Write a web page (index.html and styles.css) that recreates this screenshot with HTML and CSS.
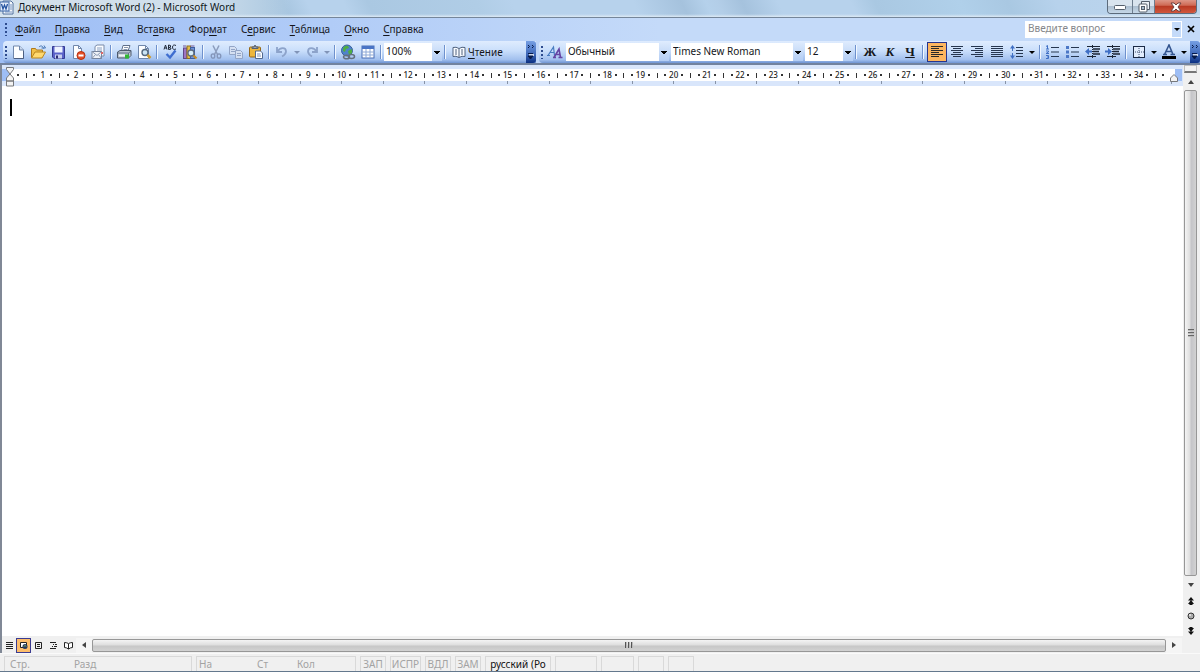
FILE: index.html
```html
<!DOCTYPE html>
<html lang="ru">
<head>
<meta charset="utf-8">
<title>Документ Microsoft Word (2) - Microsoft Word</title>
<link rel="stylesheet" href="styles.css">
</head>
<body>
<div class="window">
  <header class="titlebar">
    <svg class="app-icon" width="14" height="15" viewBox="0 0 14 15"><path d="M3 1h8l2 2v11H3z" fill="#f4f8fd" stroke="#51709e"/><path d="M10 5h2M10 7h2M10 9h2M5 12h7" stroke="#7895c2"/><rect x="0" y="2" width="9" height="9" fill="#e7effb" stroke="#3a66a8"/><path d="M1.500 4l1.500 5 1.500-4 1.500 4 1.500-5" fill="none" stroke="#2554a0" stroke-width="1.300"/></svg>
    <h1 class="title">Документ Microsoft Word (2) - Microsoft Word</h1>
    <div class="controls">
      <button class="ctl ctl-min" aria-label="Свернуть"><svg width="12" height="6" viewBox="0 0 12 6"><rect x=".5" y="1.500" width="11" height="4" rx="1" fill="#fff" stroke="#555f6b"/></svg></button>
      <button class="ctl ctl-max" aria-label="Восстановить"><svg width="12" height="12" viewBox="0 0 12 12"><path d="M3.500 3V.500h8v8H9" fill="#eef3f8" stroke="#555f6b"/><rect x="1" y="3" width="8" height="8" rx="1" fill="#fff" stroke="#555f6b"/><rect x="3.500" y="5.500" width="3" height="3" fill="#a9bccd" stroke="#555f6b"/></svg></button>
      <button class="ctl ctl-close" aria-label="Закрыть"><svg width="12" height="10" viewBox="0 0 12 10"><path d="M1 1h3l2 2 2-2h3L8 5l3 4H8L6 7 4 9H1l3-4z" fill="#fff" stroke="#6b4343"/></svg></button>
    </div>
  </header>

  <nav class="menubar">
    <span class="grip"></span>
    <div class="menus">
      <a href="#"><u>Ф</u>айл</a><a href="#"><u>П</u>равка</a><a href="#"><u>В</u>ид</a><a href="#">Вст<u>а</u>вка</a><a href="#">Фор<u>м</u>ат</a><a href="#">С<u>е</u>рвис</a><a href="#"><u>Т</u>аблица</a><a href="#"><u>О</u>кно</a><a href="#"><u>С</u>правка</a>
    </div>
    <div class="ask"><input type="text" placeholder="Введите вопрос" aria-label="Введите вопрос"><button class="drop" aria-label="Список вопросов"></button></div>
    <button class="doc-close" aria-label="Закрыть документ"><svg width="8" height="8" viewBox="0 0 8 8"><path d="M1 1l6 6M7 1L1 7" stroke="#000" stroke-width="1.700"/></svg></button>
  </nav>

  <div class="toolbars">
    <div class="toolbar standard" role="toolbar" aria-label="Стандартная">
      <span class="grip"></span>
      <button class="tool" aria-label="Создать"><svg viewBox="0 0 16 16"><path d="M3.500 2h6l4 4v8.500h-10z" fill="#fdfeff" stroke="#7087ab"/><path d="M9.500 2v4h4" fill="#c9d8ee" stroke="#7087ab"/><path d="M4 14.500h9.500V7" fill="none" stroke="#4d5f80"/></svg></button>
      <button class="tool" aria-label="Открыть"><svg viewBox="0 0 16 16"><path d="M1.500 13.500V4.500h4l1 1.500h6v3" fill="#f2c14a" stroke="#b07a1c"/><path d="M1.500 14L5 8h10.500l-3.500 6z" fill="#ffd970" stroke="#b9851f"/><path d="M9 3c2-2 4-1 4.500 1.500M11.500 4h4L14 1.500" fill="none" stroke="#4776b5"/></svg></button>
      <button class="tool" aria-label="Сохранить"><svg viewBox="0 0 16 16"><path d="M2.500 2.500h12v12H4l-1.500-1.500z" fill="#5a62c9" stroke="#343a92"/><rect x="4.500" y="2.500" width="8" height="6" fill="#eef3ff"/><rect x="5" y="10.500" width="7" height="4" fill="#c8cfee"/><rect x="6" y="11.500" width="2" height="3" fill="#2b2f74"/></svg></button>
      <button class="tool" aria-label="Разрешения"><svg viewBox="0 0 16 16"><path d="M3.500 1.500h5l3 3v10h-8z" fill="#fdfeff" stroke="#7087ab"/><path d="M8.500 1.500v3h3" fill="none" stroke="#7087ab"/><circle cx="11" cy="11.500" r="4" fill="#e4502b" stroke="#b8300f"/><rect x="8.500" y="10.500" width="5" height="2" fill="#fff"/></svg></button>
      <button class="tool" aria-label="Сообщение"><svg viewBox="0 0 16 16"><path d="M5 7V2.500L7 1h7v11H8" fill="#fafcff" stroke="#7b8ba8"/><path d="M7 4h5M7 6h5" stroke="#8ba0c0"/><rect x="2" y="7.500" width="9.500" height="7" fill="#eef1f6" stroke="#77859e"/><path d="M2 7.500l5 4 4.500-4M2 14.500l3.500-4M11.500 14.500l-3-4" fill="none" stroke="#8c9bb5"/><rect x="11" y="8" width="2" height="2" fill="#d66"/></svg></button>
      <span class="sep"></span>
      <button class="tool" aria-label="Печать"><svg viewBox="0 0 16 16"><path d="M5.500 7L7 1.500h7L12 7" fill="#fff" stroke="#60708a"/><path d="M8 3.500h4M7.500 5.500h4" stroke="#8796ae"/><path d="M1.500 8L4 6.500h11v5L12.500 14h-11z" fill="#b9c2cf" stroke="#4e5a6c"/><path d="M2 9h10.500V14M12.500 9L15 7" fill="none" stroke="#617086"/><rect x="3" y="10.500" width="8" height="2" fill="#f1f4f8"/><rect x="9" y="10.500" width="4" height="4" fill="#31b834"/></svg></button>
      <button class="tool" aria-label="Предварительный просмотр"><svg viewBox="0 0 16 16"><path d="M2.500 1.500h7l3 3v10h-10z" fill="#fdfeff" stroke="#7087ab"/><path d="M9.500 1.500v3h3" fill="none" stroke="#7087ab"/><circle cx="9" cy="8.500" r="3" fill="#cbe5f5" stroke="#566a80" stroke-width="1.400"/><path d="M11.500 11l3 3" stroke="#cf9b2a" stroke-width="2.500"/></svg></button>
      <span class="sep"></span>
      <button class="tool" aria-label="Правописание"><svg viewBox="0 0 16 16"><path d="M2 5.500l1.500-4.500L5 5.500M2.500 4h2M6.500 5.500V1q3 0 2 2-1 .5-2 .5 3 0 2.500 1.500Q8.500 5.500 6.500 5.500M14 1.500q-3-1.500-3.500 1.500Q10.500 6.500 14 5" fill="none" stroke="#222b3b"/><path d="M4.500 10l3.500 3.500L13.500 6.500" fill="none" stroke="#3f6ed0" stroke-width="2.400"/></svg></button>
      <button class="tool" aria-label="Справочные материалы"><svg viewBox="0 0 16 16"><rect x="1.500" y="4" width="3.500" height="10.500" fill="#9d75c4" stroke="#604787"/><rect x="5" y="2" width="3.500" height="12.500" fill="#e4bd43" stroke="#8c6f23"/><rect x="8.500" y="3.500" width="4" height="11" fill="#6d91d8" stroke="#3f5f9e"/><path d="M1 2h3M8.500 2h4" stroke="#70589a"/><circle cx="9" cy="9" r="3" fill="#d7edf8" stroke="#5c6b80" stroke-width="1.300"/><path d="M11.500 11.500l3 3" stroke="#c78e26" stroke-width="2.300"/></svg></button>
      <span class="sep"></span>
      <button class="tool" aria-label="Вырезать"><svg viewBox="0 0 16 16"><path d="M5 1.500l4.500 9M11 1.500l-4.500 9" stroke="#8b9cbc" stroke-width="1.500"/><ellipse cx="5" cy="12" rx="1.800" ry="2.200" fill="none" stroke="#8395b9" stroke-width="1.300"/><ellipse cx="11" cy="12" rx="1.800" ry="2.200" fill="none" stroke="#8395b9" stroke-width="1.300"/></svg></button>
      <button class="tool" aria-label="Копировать"><svg viewBox="0 0 16 16"><g fill="#d5e0f2" stroke="#93a5c6"><path d="M1.500 2.500h5l2 2v6h-7z"/><path d="M3 5.500h4M3 7.500h4"/><path d="M7.500 6.500h5l2 2v6h-7z"/><path d="M9 9.500h4M9 11.500h4"/></g></svg></button>
      <button class="tool" aria-label="Вставить"><svg viewBox="0 0 16 16"><rect x="1.500" y="3" width="11" height="10" rx="1" fill="#edb63c" stroke="#956718"/><path d="M4 4.500V3h2l1-2 1 2h2v1.500z" fill="#9ba5b3" stroke="#566070"/><path d="M7.500 7h5l2 2v5.500h-7z" fill="#fff" stroke="#51698f"/><path d="M9 10h3.500M9 12h4" stroke="#7a91b9"/></svg></button>
      <span class="sep"></span>
      <button class="tool" aria-label="Отменить"><svg viewBox="0 0 16 16"><path d="M3 3v5h5M3.500 7.500C6 3 12 3 12 7.500c0 2-1.500 3.500-4 5" fill="none" stroke="#8da3ca" stroke-width="1.800"/></svg></button>
      <button class="arrow muted" aria-label="Список отмены"></button>
      <button class="tool" aria-label="Вернуть"><svg viewBox="0 0 16 16"><path d="M13 3v5H8M12.500 7.500C10 3 4 3 4 7.500c0 2 1.500 3.500 4 5" fill="none" stroke="#8da3ca" stroke-width="1.800"/></svg></button>
      <button class="arrow muted" aria-label="Список возврата"></button>
      <span class="sep"></span>
      <button class="tool" aria-label="Гиперссылка"><svg viewBox="0 0 16 16"><circle cx="7" cy="6.500" r="5.500" fill="#4f83cb" stroke="#39629c"/><path d="M3 4q2-3 5-2l1 2-3 1-1 3-2-1zM8 7l4-2v4l-3 2z" fill="#4fae42"/><g fill="none" stroke="#64717f" stroke-width="1.500"><ellipse cx="6.500" cy="13" rx="3" ry="1.800"/><ellipse cx="11.500" cy="12.500" rx="3" ry="2"/></g></svg></button>
      <button class="tool" aria-label="Таблица"><svg viewBox="0 0 16 16"><rect x="2" y="2" width="12" height="12" fill="#fff" stroke="#4a6fb5"/><path d="M2 3.500h12" stroke="#4a74c5" stroke-width="3"/><path d="M2 8h12M2 11h12M6 5v9M10 5v9" stroke="#8ea9d6"/></svg></button>
      <span class="sep"></span>
      <select class="combo zoom" aria-label="Масштаб"><option>100%</option></select>
      <span class="sep"></span>
      <button class="reading"><svg width="14" height="14" viewBox="0 0 14 14"><path d="M1 2.500q3-1 6 1 3-2 6-1v9q-3-1-6 1-3-2-6-1z" fill="#f8fbff" stroke="#51637f"/><path d="M7 3.500v9M3 5h2M3 7h2M3 9h2M9 5h2M9 7h2M9 9h2" stroke="#51637f"/></svg><span><u>Ч</u>тение</span></button>
      <button class="cap" aria-label="Параметры панели"><svg width="8" height="18" viewBox="0 0 8 18"><path d="M1 2l1.500 1.500L1 5M5 2l1.500 1.500L5 5" fill="none" stroke="#061a4a"/><path d="M2 12h5" stroke="#fff" stroke-width="1.500"/><path d="M1 10.500h5M1 13h5l-2.500 3z" stroke="#061a4a" fill="#061a4a"/></svg></button>
    </div>

    <div class="toolbar formatting" role="toolbar" aria-label="Форматирование">
      <span class="grip"></span>
      <button class="tool" aria-label="Стили"><svg viewBox="0 0 16 16"><path d="M1 11.500L6.500 3l1 8.500M3.500 8.500h4M0 11.500h3" fill="none" stroke="#477bc0" stroke-width="1.200"/><path d="M7 13.500L12 5l1.500 8.500M9 10.500h4M6 13.500h3M11.500 13.500h4" fill="none" stroke="#6544a4" stroke-width="1.600"/></svg></button>
      <select class="combo style" aria-label="Стиль"><option>Обычный</option></select>
      <select class="combo font" aria-label="Шрифт"><option>Times New Roman</option></select>
      <select class="combo size" aria-label="Размер"><option>12</option></select>
      <span class="sep"></span>
      <button class="tool letter bold">Ж</button>
      <button class="tool letter italic">К</button>
      <button class="tool letter under">Ч</button>
      <span class="sep"></span>
      <button class="tool active" aria-label="По левому краю"><svg viewBox="0 0 16 16"><path d="M2 2.500h12M2 4.500h8M2 6.500h12M2 8.500h8M2 10.500h12M2 12.500h8" stroke="#2c2a28"/></svg></button>
      <button class="tool" aria-label="По центру"><svg viewBox="0 0 16 16"><path d="M2 2.500h12M4 4.500h8M2 6.500h12M4 8.500h8M2 10.500h12M4 12.500h8" stroke="#26364f"/></svg></button>
      <button class="tool" aria-label="По правому краю"><svg viewBox="0 0 16 16"><path d="M2 2.500h12M6 4.500h8M2 6.500h12M6 8.500h8M2 10.500h12M6 12.500h8" stroke="#26364f"/></svg></button>
      <button class="tool" aria-label="По ширине"><svg viewBox="0 0 16 16"><path d="M2 2.500h12M2 4.500h12M2 6.500h12M2 8.500h12M2 10.500h12M2 12.500h12" stroke="#26364f"/></svg></button>
      <button class="tool" aria-label="Междустрочный интервал"><svg viewBox="0 0 16 16"><path d="M7 3.500h7M7 6.500h7M7 9.500h7M7 12.500h7" stroke="#26364f"/><path d="M3.500 2v12" stroke="#3f6fc4" stroke-dasharray="5 2"/><path d="M1 4.500L3.500 1 6 4.500zM1 11.500L3.500 15 6 11.500z" fill="#3f6fc4"/></svg></button>
      <button class="arrow" aria-label="Интервалы"></button>
      <span class="sep"></span>
      <button class="tool" aria-label="Нумерованный список"><svg viewBox="0 0 16 16"><path d="M6 3.500h8M6 8h8M6 12.500h8" stroke="#26364f"/><path d="M1 2.500l1.500-1V5M1 5h3M1 7h2.500v1L1 9.500h3M1 11.500h2.500v3H1M2 13h1.500" fill="none" stroke="#3f6fc4"/></svg></button>
      <button class="tool" aria-label="Маркированный список"><svg viewBox="0 0 16 16"><path d="M6 3.500h8M6 8h8M6 12.500h8" stroke="#26364f"/><path d="M1 2h3v3H1zM1 6.500h3v3H1zM1 11h3v3H1z" fill="#4b77c6"/></svg></button>
      <button class="tool" aria-label="Уменьшить отступ"><svg viewBox="0 0 16 16"><path d="M2 2.500h13M2 12.500h9" stroke="#1c2636"/><path d="M8 5h7M8 7.500h6M8 10h7" stroke="#1c2636" stroke-width="1.600"/><path d="M0 7.500L4 4v2.500h3v2H4V11z" fill="#3f6fc4"/><path d="M7.500 1v14" stroke="#1c2636" stroke-dasharray="1 1"/></svg></button>
      <button class="tool" aria-label="Увеличить отступ"><svg viewBox="0 0 16 16"><path d="M2 2.500h13M2 12.500h9" stroke="#1c2636"/><path d="M8 5h7M8 7.500h6M8 10h7" stroke="#1c2636" stroke-width="1.600"/><path d="M7 7.500L3 4v2.500H0v2h3V11z" fill="#3f6fc4"/><path d="M7.500 1v14" stroke="#1c2636" stroke-dasharray="1 1"/></svg></button>
      <span class="sep"></span>
      <button class="tool" aria-label="Внешние границы"><svg viewBox="0 0 16 16"><rect x="2.500" y="2.500" width="11" height="11" fill="#e2edfd" stroke="#1c2a45"/><path d="M8 4v9M4 8h9" stroke="#3a4d70" stroke-dasharray="1 1"/></svg></button>
      <button class="arrow" aria-label="Границы"></button>
      <button class="tool" aria-label="Цвет шрифта"><svg viewBox="0 0 16 16"><path d="M3.500 10.500L8 1l4 9.500M5.500 7.500h5M2 10.500h4M9.500 10.500h4.500" fill="none" stroke="#34558f" stroke-width="1.600"/><path d="M1 13.500h14" stroke="#000" stroke-width="3"/></svg></button>
      <button class="arrow" aria-label="Цвета шрифта"></button>
      <button class="cap" aria-label="Параметры панели"><svg width="8" height="18" viewBox="0 0 8 18"><path d="M1 2l1.500 1.500L1 5M5 2l1.500 1.500L5 5" fill="none" stroke="#061a4a"/><path d="M2 12h5" stroke="#fff" stroke-width="1.500"/><path d="M1 10.500h5M1 13h5l-2.500 3z" stroke="#061a4a" fill="#061a4a"/></svg></button>
    </div>
  </div>

  <div class="workspace">
    <div class="editor">
      <div class="ruler">
        <svg class="indent-left" width="8" height="21" viewBox="0 0 8 21"><path d="M.500 1.500h7v2L4 8 .500 3.500zM4 8l3.500 4v3h-7v-3zM.500 15h7v5h-7z" fill="#f3f3f3" stroke="#77797d"/></svg>
        <div class="scale">
          <i class="dot"></i>
          <div class="units" id="units"></div>
          <i class="tick"></i><i class="dot"></i>
        </div>
        <div class="tabs" id="tabs"></div>
        <svg class="indent-right" width="8" height="8" viewBox="0 0 8 8"><path d="M4 .500L7.500 4v3.500h-7V4z" fill="#f3f3f3" stroke="#77797d"/></svg>
      </div>
      <main class="page" contenteditable="true" spellcheck="false" aria-label="Документ"><span class="caret"></span></main>
      <div class="bottom">
        <button class="view" aria-label="Обычный режим"><svg viewBox="0 0 9 9"><path d="M1 1.500h7M1 3.500h7M1 5.500h7M1 7.500h7" stroke="#222"/></svg></button>
        <button class="view on" aria-label="Веб-документ"><svg viewBox="0 0 9 9"><path d="M1.500 1.500h6v5h-6z" fill="#fff" stroke="#222"/><circle cx="6" cy="5.500" r="2.500" fill="#24395e"/><path d="M5 5.500l1-1 1 1" fill="none" stroke="#aee06a"/></svg></button>
        <button class="view" aria-label="Разметка страницы"><svg viewBox="0 0 9 9"><path d="M1.500 1.500h6v6h-6zM3 3.500h3M3 5.500h3" fill="none" stroke="#222"/></svg></button>
        <button class="view" aria-label="Структура"><svg viewBox="0 0 9 9"><path d="M1 1.500h6M4 3.500h1M6 3.500h2M3 5.500h1M5 5.500h3M1 7.500h6" stroke="#222"/></svg></button>
        <button class="view" aria-label="Режим чтения"><svg viewBox="0 0 9 9"><path d="M.500 1.500q2 0 4 1 2-1 4-1v5q-2 0-4 1.500-2-1.500-4-1.500zM4.500 3v5" fill="#fff" stroke="#222"/></svg></button>
        <button class="hbtn" aria-label="Прокрутить влево"><svg width="4" height="6" viewBox="0 0 4 6"><path d="M4 0v6L0 3z" fill="#444"/></svg></button>
        <div class="hthumb"><i></i><i></i><i></i></div>
        <button class="hbtn end" aria-label="Прокрутить вправо"><svg width="4" height="6" viewBox="0 0 4 6"><path d="M0 0v6l4-3z" fill="#444"/></svg></button>
      </div>
    </div>
    <div class="vscroll">
      <span class="split"></span>
      <button class="vbtn" aria-label="Прокрутить вверх"><svg width="6" height="4" viewBox="0 0 6 4"><path d="M0 4h6L3 0z" fill="#444"/></svg></button>
      <div class="vthumb"><i></i><i></i><i></i></div>
      <button class="vbtn" aria-label="Прокрутить вниз"><svg width="6" height="4" viewBox="0 0 6 4"><path d="M0 0h6L3 4z" fill="#444"/></svg></button>
      <button class="nav" aria-label="Предыдущая страница"><svg width="6" height="8" viewBox="0 0 6 8"><path d="M0 3.500h6L3 0zM0 7h6L3 3zM1.500 7h3v1h-3z" fill="#111"/></svg></button>
      <button class="nav" aria-label="Выбор объекта перехода"><svg width="8" height="8" viewBox="0 0 8 8"><circle cx="4" cy="4" r="3" fill="#aaa" stroke="#333"/><circle cx="3" cy="3" r="1" fill="#eee"/></svg></button>
      <button class="nav" aria-label="Следующая страница"><svg width="6" height="8" viewBox="0 0 6 8"><path d="M1.500 0h3v1H6L3 5 0 1h1.500zM0 4.500h6L3 8z" fill="#111"/></svg></button>
    </div>
  </div>

  <footer class="status">
    <div class="cell where"><span>Стр.</span><span>Разд</span></div>
    <div class="cell pos"><span>На</span><span>Ст</span><span>Кол</span></div>
    <div class="cell mode">ЗАП</div><div class="cell mode wide">ИСПР</div><div class="cell mode">ВДЛ</div><div class="cell mode">ЗАМ</div>
    <div class="cell lang">русский (Ро</div>
    <div class="cell blank-a"></div><div class="cell blank-b"></div><div class="cell blank-c"></div><div class="cell blank-c"></div>
  </footer>
</div>
<script src="ruler.js"></script>
</body>
</html>
```
FILE: ruler.js
```js
const units = document.getElementById('units');
for (let n = 1; n <= 34; n++) {
  const unit = document.createElement('div');
  unit.className = 'unit';
  unit.innerHTML = `<i class="tick"></i><i class="dot"></i><b>${n}</b><i class="dot"></i>`;
  units.append(unit);
}
const tabs = document.getElementById('tabs');
for (let n = 0; n < 28; n++) tabs.append(document.createElement('i'));
```
FILE: styles.css
```css
* { box-sizing: border-box; }
html, body { height: 100%; }
body { margin: 0; overflow: hidden; font-family: "Noto Sans", "Open Sans", sans-serif; font-size: 10px; line-height: 14px; color: #15171c; }
button { margin: 0; padding: 0; border: 0; background: none; color: inherit; font: inherit; display: flex; align-items: center; justify-content: center; flex: none; }
svg { display: block; flex: none; }
.window { height: 100%; display: flex; flex-direction: column; background: #f0f0f0; border-bottom: 1px solid #64788d; }

.titlebar { display: flex; align-items: flex-start; height: 18px; padding-right: 3px; flex: none; border-bottom: 1px solid #75869a;
  background: linear-gradient(#ffffff00 14px, #dce9f4 17px), linear-gradient(to right, #d3e0eb 0, #d0dfec 200px, transparent 290px),
  linear-gradient(65deg, #a9c7e0 22%, #a8c6e0 24%, #b7d2ec 26%, #b7d2ec 29%, #aac8e2 31%, #b0cde6 40%, #b7d2ec 43%, #b7d2ec 53%, #a5c2dd 57%, #b5d1eb 59%, #b3cee8 60%, #a5c2dd 62%, #b7d2ec 65%, #b7d2ec 71%, #a9c8e2 73%, #b0d0ea 80%, #a9c8e2 84%, #b7d2ec 88%, #bdd5eb 100%); }
.app-icon { margin-right: 4px; }
.title { margin: 0; flex: 1; font-size: 10px; line-height: 15px; font-weight: 400; color: #101820; }
.controls { display: flex; height: 14px; border: 1px solid #5c6b7b; border-top: 0; border-radius: 0 0 4px 4px; overflow: hidden; }
.ctl { height: 13px; background: linear-gradient(#d9e4ee 45%, #adbfd0 50%, #c6d8e8); border-right: 1px solid #6c7c8d; }
.ctl-min { width: 25px; }
.ctl-max { width: 22px; }
.ctl-close { width: 41px; border: 0; background: linear-gradient(#dd9687, #cf6b56 40%, #b93a24 50%, #d2583d); }

.menubar { display: flex; align-items: center; height: 23px; flex: none; padding: 0 0 1px 5px; background: linear-gradient(to right, #9ebef5, #c4daf9 55%, #c4daf9); }
.grip { width: 2px; height: 13px; flex: none; background: repeating-linear-gradient(#2d4b8e 0 2px, transparent 2px 4px); }
.menus { display: flex; gap: 14px; margin-left: 8px; flex: 1; }
.menus a { color: inherit; text-decoration: none; }
u { text-decoration: underline; text-underline-offset: 2px; }
.ask { display: flex; width: 157px; height: 17px; background: #fff; }
.ask input { flex: 1; min-width: 0; padding: 0 3px 2px; border: 0; background: none; font: inherit; outline: 0; }
.ask input::placeholder { color: #85878c; opacity: 1; }
.drop { width: 10px; background: #c4daf9; border: 1px solid #fff; border-left: 0; }
.drop::after, .arrow::after { content: ""; border: 3px solid transparent; border-top-color: #000; border-bottom: 0; }
.doc-close { width: 18px; }

.toolbars { display: flex; gap: 3px; height: 24px; flex: none; padding-left: 3px; background: linear-gradient(to right, #9ebef5, #c4daf9 55%); border-bottom: 2px solid #72839f; }
.toolbar { display: flex; align-items: center; height: 22px; padding-left: 2px; border-radius: 4px 0 0 4px; background: linear-gradient(#dfecfe, #c9defb 45%, #a1bfee 85%, #6f94d3); }
.standard { flex: none; }
.formatting { flex: 1; min-width: 0; }
.standard .grip { margin-right: 1px; }
.formatting .grip { margin-right: 2px; }
.tool { width: 20px; height: 20px; }
.tool svg { width: 16px; height: 16px; }
.tool.active { background: #fdb65f; border: 1px solid #27348c; }
.letter { font-family: "Liberation Serif", serif; font-size: 13px; font-weight: 700; }
.italic { font-style: italic; }
.under { text-decoration: underline; }
.sep { width: 6px; height: 14px; flex: none; background: linear-gradient(to right, transparent 2px, #6e91cd 2px 3px, #f2f8ff 3px 4px, transparent 4px); }
.formatting .sep:nth-of-type(-n+3) { width: 7px; }
.arrow { width: 10px; height: 20px; }
.muted::after { border-top-color: #8194b7; }
.combo { appearance: none; flex: none; height: 18px; margin: 0; padding: 0 12px 2px 2px; border: 0; border-radius: 0; color: inherit; font: inherit;
  background: conic-gradient(from 315deg at 50% 100%, #000 90deg, transparent 0) right 2px center / 6px 3px no-repeat, linear-gradient(#dbe9fc, #b3cdf4) right / 10px 100% no-repeat, #fff;
  background: linear-gradient(#000, #000) right 4px top 10px / 2px 1px no-repeat, linear-gradient(#000, #000) right 3px top 9px / 4px 1px no-repeat, linear-gradient(#000, #000) right 2px top 8px / 6px 1px no-repeat, linear-gradient(#dbe9fc, #b3cdf4) right / 10px 100% no-repeat, #fff; }
.zoom { width: 58px; }
.style { width: 103px; margin: 0 2px 0 1px; }
.font { width: 132px; margin-right: 2px; }
.size { width: 48px; }
.reading { gap: 2px; width: 78px; height: 20px; padding-left: 4px; justify-content: flex-start; }
.cap { width: 10px; height: 22px; border-radius: 0 3px 3px 0; background: linear-gradient(#769fe3, #3e68b9 60%, #0b2f82); margin-left: auto; }

.workspace { display: flex; flex: 1; min-height: 0; padding-right: 2px; border-left: 2px solid #808896; }
.editor { flex: 1; min-width: 0; display: flex; flex-direction: column; }
.ruler { position: relative; flex: none; height: 21px; padding-top: 4px; background: #d9e6fb; }
.scale { display: flex; height: 12px; margin-right: 1px; padding: 0 15px 0 12px; background: linear-gradient(to right, #9ebef5 8px, transparent 8px), linear-gradient(to left, #9ebef5 7px, #fff 7px); }
.units { flex: 1; display: grid; grid-template-columns: repeat(34, 1fr); }
.unit { display: grid; grid-template-columns: repeat(4, 1fr); justify-items: center; }
.unit b { width: 16px; text-align: center; justify-self: center; margin: 0 -4px; font-size: 8px; line-height: 12px; font-weight: 500; color: #222; }
.tick, .dot { width: 8px; height: 12px; background: linear-gradient(#333, #333) center / 1px 5px no-repeat; }
.dot { background-size: 2px 2px; }
.tabs { display: flex; height: 5px; margin: 0 11px 0 8px; }
.tabs i { flex: 1; height: 3px; border-right: 1px solid #8793a7; }
.indent-left { position: absolute; left: 4px; top: 1px; }
.indent-right { position: absolute; right: 5px; top: 9px; }
.page { flex: 1; min-height: 0; padding: 13px 8px; background: #fff; outline: 0; caret-color: transparent; }
.caret { display: block; width: 2px; height: 17px; background: #000; }

.bottom { display: flex; align-items: center; height: 16px; flex: none; margin-top: 1px; }
.view { width: 15px; height: 15px; }
.view:first-child { width: 14px; }
.view svg { width: 9px; height: 9px; }
.view.on { background: #fcbd6b; border: 1px solid #3b3b91; }
.hbtn { width: 16px; height: 15px; background: #f5f5f5; }
.hbtn.end { margin-right: 1px; }
.hthumb, .vthumb { display: flex; align-items: center; justify-content: center; gap: 1px; flex: 1; border: 1px solid #979797; border-radius: 2px; }
.hthumb { height: 13px; background: linear-gradient(#f4f4f4, #dedede 45%, #c7c7c7 55%, #d2d2d2); }
.hthumb i { width: 2px; height: 6px; background: #555; border-right: 1px solid #bbb; }
.vscroll { width: 15px; flex: none; display: flex; flex-direction: column; align-items: stretch; padding: 0 1px 1px; background: #f0f0f0; }
.split { height: 8px; background: #f3f3f3; border: 1px solid #bfbfbf; border-bottom: 2px solid #777; }
.vbtn { height: 17px; }
.vthumb { flex-direction: column; background: linear-gradient(to right, #f4f4f4, #dedede 45%, #c4c4c8 55%, #d2d2d2); }
.vthumb i { width: 6px; height: 2px; background: #666; border-bottom: 1px solid #bbb; }
.nav { height: 15px; }
.vscroll .nav:last-child { margin-bottom: 14px; }

.status { display: flex; gap: 4px; height: 18px; flex: none; padding: 2px 4px 0; color: #a3a3a3; border-top: 1px solid #fafafa; }
.cell { flex: none; display: flex; justify-content: center; line-height: 14px; border: 1px solid #d9d9d9; border-bottom: 0; white-space: nowrap; overflow: hidden; }
.where { width: 188px; justify-content: flex-start; padding-left: 5px; }
.where span { width: 64px; }
.pos { width: 160px; justify-content: flex-start; padding-left: 2px; }
.pos span { width: 61px; }
.pos span:nth-child(2) { width: 42px; }
.mode { width: 26px; }
.mode.wide { width: 31px; }
.lang { width: 66px; color: #111; }
.blank-a { width: 42px; }
.blank-b { width: 33px; }
.blank-c { width: 26px; }
```
